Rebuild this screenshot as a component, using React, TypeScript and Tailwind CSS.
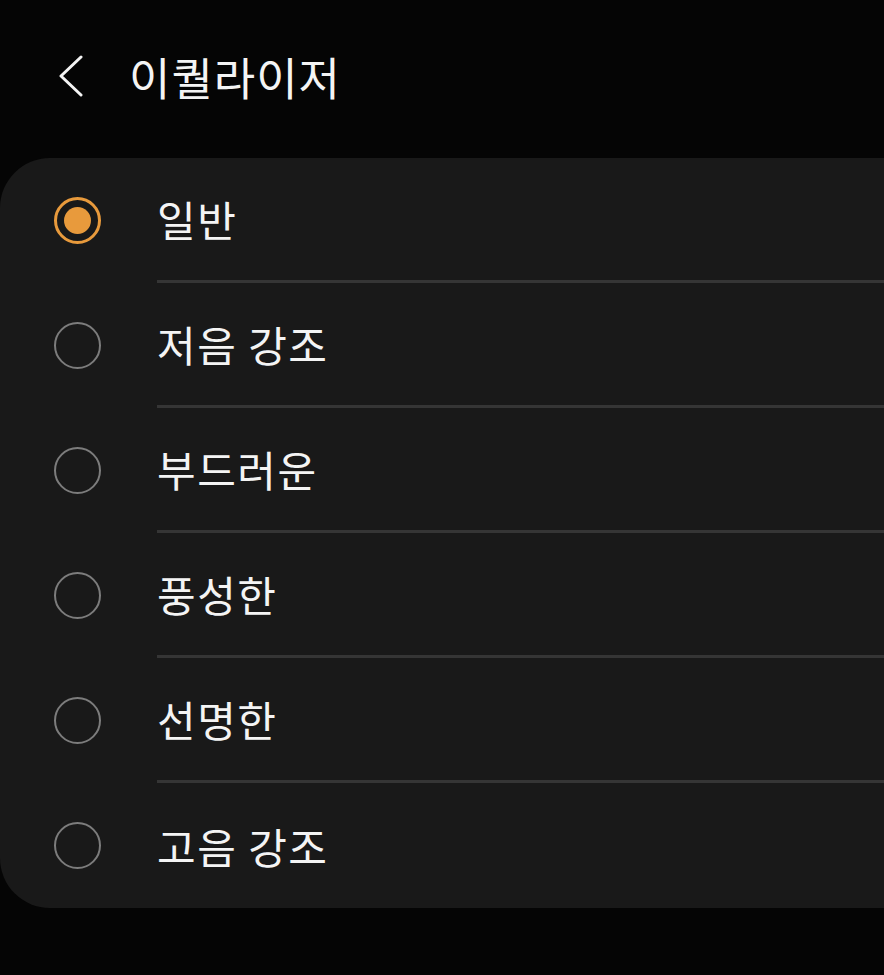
const options = ['일반', '저음 강조', '부드러운', '풍성한', '선명한', '고음 강조'];

export default function App() {
  const selected = 0;

  return (
    <div
      className="min-h-screen w-full overflow-hidden bg-[#050505] text-[#f4f4f4]"
      style={{ fontFamily: '"Noto Sans CJK KR", "Noto Sans", sans-serif' }}
    >
      {/* header */}
      <div className="flex h-[152px] items-center">
        <button className="ml-[56px] flex h-[44px] w-[30px] items-center justify-start">
          <svg width="28" height="42" viewBox="0 0 28 42" fill="none">
            <polyline
              points="25,2 5,21 25,40"
              stroke="#f4f4f4"
              strokeWidth="3"
              strokeLinecap="round"
              strokeLinejoin="round"
            />
          </svg>
        </button>
        <h1 className="ml-[43px] text-[45px] font-normal leading-none tracking-[1px]">이퀄라이저</h1>
      </div>

      {/* options card */}
      <div className="mt-[6px] mr-[-60px] rounded-[50px] bg-[#191919]">
        {options.map((label, i) => (
          <div key={label} className="flex h-[125px] items-center">
            <div className="ml-[54px] flex w-[47px] shrink-0 items-center justify-center">
              {i === selected ? (
                <div className="flex h-[47px] w-[47px] items-center justify-center rounded-full border-[3px] border-[#e89a3c]">
                  <div className="h-[27px] w-[27px] rounded-full bg-[#e89a3c]" />
                </div>
              ) : (
                <div className="h-[47px] w-[47px] rounded-full border-[2.5px] border-[#7c7c7c]" />
              )}
            </div>
            <div
              className={
                'ml-[56px] flex h-full flex-1 items-center ' +
                (i < options.length - 1 ? 'border-b-[3px] border-[#353535]' : '')
              }
            >
              <span className="text-[42px] leading-none tracking-[1.5px]">{label}</span>
            </div>
          </div>
        ))}
      </div>
    </div>
  );
}
